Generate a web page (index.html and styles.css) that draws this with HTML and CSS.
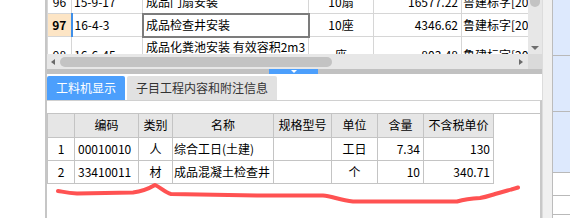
FILE: index.html
```html
<!DOCTYPE html>
<html lang="zh-CN">
<head>
<meta charset="utf-8">
<title>工料机显示</title>
<link rel="stylesheet" href="styles.css">
</head>
<body>
<div class="app">
  <div class="blank"></div>
  <div class="main">
    <div class="top">
      <div class="grid-view">
        <table class="grid">
          <colgroup>
            <col class="g-num"><col class="g-code"><col class="g-name"><col class="g-unit"><col class="g-price"><col class="g-src">
          </colgroup>
          <tr class="r-std">
            <td class="c">96</td><td>15-9-17</td><td class="nm">成品门扇安装</td><td class="c">10扇</td><td class="r">16577.22</td><td class="src">鲁建标字[2016]</td>
          </tr>
          <tr class="r-std">
            <td class="c sel-num">97</td><td>16-4-3</td><td class="nm sel-cell">成品检查井安装</td><td class="c">10座</td><td class="r">4346.62</td><td class="src">鲁建标字[2016]</td>
          </tr>
          <tr class="r-tall">
            <td class="c">98</td><td>16-6-45</td><td class="nm top-al">成品化粪池安装 有效容积2m3</td><td class="c">座</td><td class="r">803.48</td><td class="src">鲁建标字[2016]</td>
          </tr>
        </table>
      </div>
      <div class="vscroll">
        <div class="vthumb"></div>
        <div class="varrow"></div>
      </div>
    </div>
    <div class="hscroll-row">
      <div class="hscroll">
        <span class="arrow-left"></span>
        <div class="hthumb"></div>
        <span class="arrow-right"></span>
      </div>
      <div class="corner"></div>
    </div>
    <div class="splitter">
      <div class="handle"><span class="handle-arrow"></span></div>
    </div>
    <div class="bottom">
      <div class="tabs">
        <div class="tab active">工料机显示</div>
        <div class="tab">子目工程内容和附注信息</div>
      </div>
      <div class="panel">
        <div class="strip"></div>
        <div class="gridbox">
          <table class="sub">
            <colgroup>
              <col class="s-num"><col class="s-code"><col class="s-type"><col class="s-name"><col class="s-spec"><col class="s-unit"><col class="s-qty"><col class="s-price">
            </colgroup>
            <tr>
              <th></th><th>编码</th><th>类别</th><th>名称</th><th>规格型号</th><th>单位</th><th>含量</th><th>不含税单价</th>
            </tr>
            <tr>
              <td class="c">1</td><td class="code">00010010</td><td class="c">人</td><td class="nm">综合工日(土建)</td><td></td><td class="c">工日</td><td class="r">7.34</td><td class="r">130</td>
            </tr>
            <tr>
              <td class="c">2</td><td class="code">33410011</td><td class="c">材</td><td class="nm">成品混凝土检查井</td><td></td><td class="c">个</td><td class="r">10</td><td class="r">340.71</td>
            </tr>
          </table>
        </div>
      </div>
    </div>
  </div>
  <div class="gutter"></div>
  <div class="side">
    <div class="sblock b1"></div>
    <div class="sblock b2"></div>
    <div class="sblock b3"></div>
    <div class="sblock w1"></div>
    <div class="sblock w2"></div>
  </div>
</div>
<svg class="squiggle" width="570" height="218" viewBox="0 0 570 218" aria-hidden="true">
  <path d="M58 191 C62 191.5,67 193,77 193.5 L133 192.5 C142 191.5,149 188.5,155 185 C160 187,165 192.5,171 194 L257 195.5 L323 195.5 C332 196,340 200.5,353 201.5 L457 201.5 C462 200,470 198.5,480 198 C486 197,490 195.5,495 194 C505 191,512 189.5,518 187.5" fill="none" stroke="#ff5252" stroke-width="4" stroke-linecap="round" stroke-linejoin="round"/>
</svg>
</body>
</html>
```

FILE: styles.css
```css
* { box-sizing: border-box; }

body {
  margin: 0;
  width: 570px;
  height: 218px;
  overflow: hidden;
  background: #fff;
  font-family: "Noto Sans CJK SC", "Noto Sans", sans-serif;
  font-size: 12px;
  color: #000;
  position: relative;
}

.app {
  display: flex;
  height: 218px;
}

.blank {
  width: 45px;
  flex: none;
}

.main {
  width: 497px;
  flex: none;
  border-left: 2px solid #c6c6c6;
  display: flex;
  flex-direction: column;
}

/* top grid */
.top {
  display: flex;
  height: 54px;
  flex: none;
}

.grid-view {
  width: 481px;
  overflow: hidden;
}

.grid {
  border-collapse: collapse;
  table-layout: fixed;
  width: 514px;
  margin-top: -10px;
}

.g-num { width: 24px; }
.g-code { width: 71px; }
.g-name { width: 166px; }
.g-unit { width: 65px; }
.g-price { width: 88px; }
.g-src { width: 100px; }

.grid td {
  border: 1px solid #d6d6d6;
  padding: 0 2px;
  line-height: 14px;
  white-space: nowrap;
  overflow: hidden;
  vertical-align: middle;
}

.grid .r-std td { height: 23px; }
.grid .r-tall td { height: 36px; }

.grid td.c { text-align: center; }
.grid td.r { text-align: right; padding-right: 3px; }
.grid td.nm { padding-left: 3px; }
.grid td.src { padding-left: 1px; }
.grid td.top-al { vertical-align: top; padding-top: 3px; }

.grid td.sel-num {
  background: #fde5c5;
  font-weight: bold;
  border-right: 2px solid #3f8fe9;
}

.grid td.sel-cell {
  outline: 2px solid #7c7c7c;
  outline-offset: -1px;
}

/* vertical scrollbar */
.vscroll {
  width: 14px;
  flex: none;
  background: #e7e7e7;
  display: flex;
  flex-direction: column;
  align-items: center;
}

.vthumb {
  width: 10px;
  height: 7px;
  background: #c3c3c3;
  border-radius: 0 0 5px 5px;
}

.varrow {
  width: 0;
  height: 0;
  margin-top: 39px;
  border-left: 4px solid transparent;
  border-right: 4px solid transparent;
  border-top: 4px solid #6e6e6e;
}

/* horizontal scrollbar */
.hscroll-row {
  display: flex;
  height: 15px;
  flex: none;
}

.hscroll {
  width: 481px;
  background: #e7e7e7;
  display: flex;
  align-items: center;
}

.arrow-left {
  width: 0;
  height: 0;
  margin-left: 4px;
  border-top: 3px solid transparent;
  border-bottom: 3px solid transparent;
  border-right: 4px solid #6a6a6a;
}

.hthumb {
  width: 272px;
  height: 10px;
  margin-left: 5px;
  background: #c3c3c3;
  border-radius: 5px;
}

.arrow-right {
  width: 0;
  height: 0;
  margin-left: auto;
  margin-right: 5px;
  border-top: 3px solid transparent;
  border-bottom: 3px solid transparent;
  border-left: 4px solid #6a6a6a;
}

.corner {
  width: 14px;
  background: #dadada;
}

/* splitter */
.splitter {
  height: 5px;
  flex: none;
  background: #c1c1c1;
  display: flex;
}

.handle {
  width: 49px;
  margin-left: 222px;
  background: #4c9ffc;
  display: flex;
  justify-content: center;
  padding-top: 1px;
}

.handle-arrow {
  width: 0;
  height: 0;
  border-left: 3px solid transparent;
  border-right: 3px solid transparent;
  border-top: 3px solid #fff;
}

/* bottom pane */
.bottom {
  flex: 1;
  display: flex;
  flex-direction: column;
}

.tabs {
  display: flex;
  gap: 2px;
  margin-top: 2px;
  height: 24px;
  flex: none;
}

.tab {
  padding: 0 9px;
  line-height: 24px;
  background: #e1e1e1;
  color: #333;
  border-radius: 2px 2px 0 0;
  white-space: nowrap;
}

.tab.active {
  background: #4c9ffc;
  color: #fff;
}

.panel {
  flex: 1;
  border-top: 1px solid #d0d0d0;
  border-right: 2px solid #c8c8c8;
}

.strip {
  height: 12px;
}

.gridbox {
  border-top: 1px solid #c4c4c4;
}

.sub {
  border-collapse: collapse;
  table-layout: fixed;
  width: 446px;
}

.s-num { width: 27px; }
.s-code { width: 64px; }
.s-type { width: 34px; }
.s-name { width: 101px; }
.s-spec { width: 58px; }
.s-unit { width: 46px; }
.s-qty { width: 46px; }
.s-price { width: 70px; }

.sub th,
.sub td {
  border: 1px solid #c4c4c4;
  line-height: 14px;
  white-space: nowrap;
  overflow: hidden;
  padding: 0 2px;
}

.sub th {
  border-top: none;
  height: 23px;
  background: #e6e6e6;
  font-weight: normal;
  text-align: center;
}

.sub td { height: 23px; }
.sub td.c { text-align: center; }
.sub td.r { text-align: right; padding-right: 3px; }
.sub td.code { padding-left: 3px; }
.sub td.nm { padding-left: 1px; }

/* right edge */
.gutter {
  width: 11px;
  flex: none;
  background: #f0f0f0;
  border-left: 1px solid #dcdcdc;
  border-right: 1px solid #bcbcbc;
}

.side {
  flex: 1;
  display: flex;
  flex-direction: column;
}

.sblock {
  border-bottom: 1px solid #b9b9b9;
  flex: none;
}

.b1 { height: 56px; background: #dde9fd; }
.b2 { height: 56px; background: #dde9fd; }
.b3 { height: 61px; background: #dde9fd; }
.w1 { height: 23px; }
.w2 { height: 19px; }

.squiggle {
  position: absolute;
  left: 0;
  top: 0;
  pointer-events: none;
}
```
